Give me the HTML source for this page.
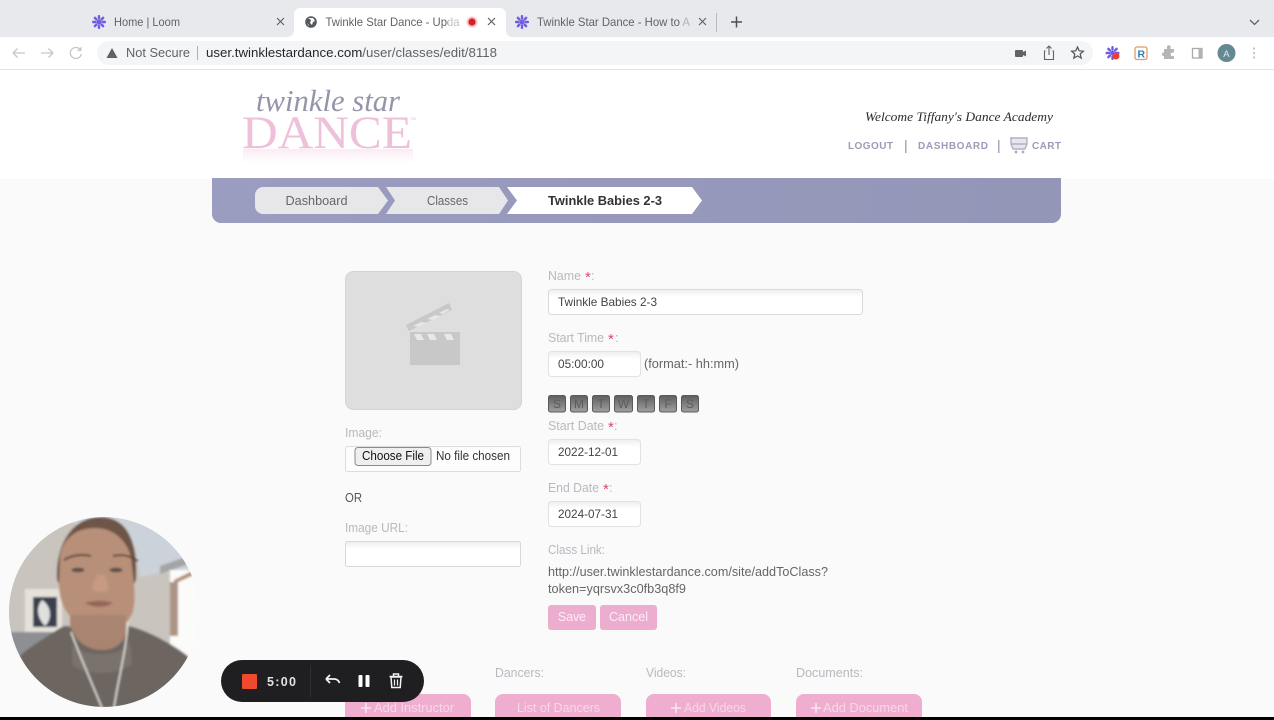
<!DOCTYPE html>
<html lang="en">
<head>
<meta charset="utf-8">
<title>Twinkle Star Dance</title>
<style>
html,body{margin:0;padding:0;width:1274px;height:720px;overflow:hidden;background:#fafafa}
svg{display:block;filter:blur(.35px)}
text{font-family:"Liberation Sans",sans-serif}
.lab{fill:#b8b8c0;font-size:13px}
.val{fill:#444;font-size:12px}
.star{fill:#dc4a6c;font-size:15px}
.tab{fill:#5f6368;font-size:12px}
</style>
</head>
<body>
<svg width="1274" height="720" viewBox="0 0 1274 720" xmlns="http://www.w3.org/2000/svg">
<defs>
<linearGradient id="fade" x1="0" y1="0" x2="0" y2="1"><stop offset="0" stop-color="#f0bcd8" stop-opacity=".3"/><stop offset="1" stop-color="#f0bcd8" stop-opacity="0"/></linearGradient>
<linearGradient id="day" x1="0" y1="0" x2="0" y2="1"><stop offset="0" stop-color="#5e5e5e"/><stop offset="1" stop-color="#a0a0a0"/></linearGradient>
<linearGradient id="inp" x1="0" y1="0" x2="0" y2="1"><stop offset="0" stop-color="#eeeeee"/><stop offset=".3" stop-color="#fff"/></linearGradient>
<linearGradient id="bar" x1="0" y1="0" x2="1" y2="0"><stop offset="0" stop-color="#9a9cc0"/><stop offset="1" stop-color="#9496b8"/></linearGradient>
<clipPath id="face"><circle cx="104" cy="612" r="95"/></clipPath>
<clipPath id="pageclip"><rect x="0" y="0" width="1274" height="717"/></clipPath>
<filter id="soft"><feGaussianBlur stdDeviation="1"/></filter>
<g id="loom"><g fill="#6f5ce0"><circle r="2.4"/><rect x="-1.2" y="-7" width="2.4" height="4.500" rx="1"/><rect x="-1.2" y="2.500" width="2.4" height="4.500" rx="1"/><rect x="-7" y="-1.2" width="4.500" height="2.4" rx="1"/><rect x="2.500" y="-1.2" width="4.500" height="2.4" rx="1"/><rect x="-1.2" y="-7" width="2.4" height="4.500" rx="1" transform="rotate(45)"/><rect x="-1.2" y="2.500" width="2.4" height="4.500" rx="1" transform="rotate(45)"/><rect x="-7" y="-1.2" width="4.500" height="2.4" rx="1" transform="rotate(45)"/><rect x="2.500" y="-1.2" width="4.500" height="2.4" rx="1" transform="rotate(45)"/></g></g>
</defs>

<!-- Page -->
<rect width="1274" height="720" fill="#fafafa"/>
<rect y="70" width="1274" height="109" fill="#fff"/>

<!-- Tab strip -->
<rect width="1274" height="37" fill="#e8e9ed"/>
<use href="#loom" x="99" y="22"/>
<text x="114" y="26" class="tab" textLength="66" lengthAdjust="spacingAndGlyphs">Home | Loom</text>
<path d="M277 18l7 7M284 18l-7 7" stroke="#5f6368" stroke-width="1.2" fill="none"/>
<path d="M286 37c5 0 8-2 8-7V14c0-3 3-6 6-6h200c3 0 6 3 6 6v16c0 5 3 7 7 7z" fill="#fff"/>
<circle cx="311" cy="22" r="5.8" fill="#55585d"/>
<path d="M308 18l3 2-1 3 2 2 1-3 2-1-2-3zM307 23l2 2v1z" fill="#fff"/>
<text x="325.500" y="26" class="tab" textLength="134" lengthAdjust="spacingAndGlyphs">Twinkle Star Dance - Upda</text>
<rect x="448" y="12" width="12" height="20" fill="#fff" opacity=".6"/>
<circle cx="472" cy="22" r="5.500" fill="#f4c4c4"/><circle cx="472" cy="22" r="3.600" fill="#d81f26"/>
<path d="M488 18l7 7M495 18l-7 7" stroke="#5f6368" stroke-width="1.2" fill="none"/>
<use href="#loom" x="522" y="22"/>
<text x="537" y="26" class="tab" textLength="153" lengthAdjust="spacingAndGlyphs">Twinkle Star Dance - How to A</text>
<rect x="680" y="12" width="11" height="20" fill="#e8e9ed" opacity=".6"/>
<path d="M699 18l7 7M706 18l-7 7" stroke="#5f6368" stroke-width="1.2" fill="none"/>
<rect x="716" y="13" width="1" height="19" fill="#b8babf"/>
<path d="M736.500 16.500v11M731 22h11" stroke="#4c4f54" stroke-width="1.5" fill="none"/>
<path d="M1250 20l4.500 4.500L1259 20" stroke="#5f6368" stroke-width="1.3" fill="none"/>

<!-- Toolbar -->
<rect y="37" width="1274" height="32" fill="#fff"/>
<rect y="69" width="1274" height="1" fill="#e3e4e7"/>
<path d="M13 53h12M13 53l4.500-4.500M13 53l4.500 4.500" stroke="#c4c6ca" stroke-width="1.3" fill="none"/>
<path d="M41 53h12M53 53l-4.500-4.500M53 53l-4.500 4.500" stroke="#c4c6ca" stroke-width="1.3" fill="none"/>
<path d="M80.500 50a5.500 5.500 0 1 0 .8 4" stroke="#c4c6ca" stroke-width="1.3" fill="none"/><path d="M81.500 46.500v4.500h-4.500z" fill="#c4c6ca"/>
<rect x="97" y="41" width="996" height="24" rx="12" fill="#f4f5f6"/>
<path d="M112 48l5.500 10h-11z" fill="#5f6368"/>
<text x="126" y="57" fill="#5f6368" font-size="12.500" textLength="64" lengthAdjust="spacingAndGlyphs">Not Secure</text>
<rect x="197" y="46" width="1" height="14" fill="#aeb0b4"/>
<text x="206" y="57" font-size="12.500" textLength="291" lengthAdjust="spacingAndGlyphs" fill="#5f6368"><tspan fill="#25272a">user.twinklestardance.com</tspan>/user/classes/edit/8118</text>
<rect x="1015" y="50" width="8" height="7" rx="1" fill="#5f6368"/><path d="M1023 52l3-1.500v6l-3-1.500z" fill="#5f6368"/>
<path d="M1045.500 51h-1v8.500h9V51h-1M1049 55V46.500M1046.500 48.500l2.500-2.500 2.500 2.500" stroke="#5f6368" stroke-width="1.100" fill="none"/>
<path d="M1077.500 47l1.700 3.800 4.200.4-3.200 2.800 1 4.100-3.700-2.200-3.700 2.200 1-4.100-3.200-2.800 4.200-.4z" stroke="#4f5256" stroke-width="1.200" fill="none"/>
<use href="#loom" x="1112.500" y="53"/><circle cx="1116" cy="56" r="3.500" fill="#ee3f30"/>
<rect x="1135" y="47" width="12" height="12.500" rx="2" fill="#fff" stroke="#e09a66" stroke-width="1.300"/>
<text x="1137.500" y="57.500" font-size="10.500" font-weight="bold" fill="#2d7fb8">R</text>
<path d="M1164 50h3v-2a1.800 1.800 0 0 1 3.600 0v2h3.400v3.500h-1.500a1.800 1.800 0 0 0 0 3.600h1.500v2.900h-10v-3h-1a2 2 0 0 1 0-3.500h1z" fill="#b4b6ba" transform="translate(0,-1)"/>
<rect x="1192.500" y="48.500" width="9.500" height="9.500" fill="#fff" stroke="#a8aaae" stroke-width="1.300"/><rect x="1198.500" y="48.500" width="3.500" height="9.500" fill="#b0b2b6"/>
<circle cx="1226.500" cy="53" r="9" fill="#668893"/>
<text x="1223.300" y="57" font-size="9.500" fill="#e8eef0">A</text>
<g fill="#c0c2c6"><circle cx="1254" cy="48.500" r="1.100"/><circle cx="1254" cy="53" r="1.100"/><circle cx="1254" cy="57.500" r="1.100"/></g>

<!-- Logo -->
<text x="256" y="111" font-style="italic" font-size="31" fill="#9494aa" textLength="144" lengthAdjust="spacingAndGlyphs" style="font-family:'Liberation Serif',serif">twinkle star</text>
<text x="242" y="148" font-size="47" fill="#efc0da" textLength="170" lengthAdjust="spacingAndGlyphs" style="font-family:'Liberation Serif',serif">DANCE</text>
<text x="410" y="120" font-size="4" fill="#ecb4d2">TM</text>
<rect x="243" y="149" width="170" height="14" fill="url(#fade)"/>

<!-- Header right -->
<text x="865" y="121" font-size="13" font-style="italic" fill="#2a2a2e" textLength="188" lengthAdjust="spacingAndGlyphs" style="font-family:'Liberation Serif',serif">Welcome Tiffany's Dance Academy</text>
<g font-size="10" font-weight="bold" fill="#9c9cb8">
<text x="848" y="149" textLength="45" lengthAdjust="spacing">LOGOUT</text>
<text x="904" y="150" font-size="14" font-weight="normal" fill="#8f8fae">|</text>
<text x="918" y="149" textLength="70" lengthAdjust="spacing">DASHBOARD</text>
<text x="997" y="150" font-size="14" font-weight="normal" fill="#8f8fae">|</text>
<text x="1032" y="149" textLength="29" lengthAdjust="spacing">CART</text>
</g>
<path d="M1010 138h17v6l-2 5h-12l-2-5v-6M1011 144h16" stroke="#b0b0c6" stroke-width="1.400" fill="#e6e6ee"/><circle cx="1016" cy="152" r="1.400" fill="#a8a8c0"/><circle cx="1023" cy="152" r="1.400" fill="#a8a8c0"/>

<!-- Breadcrumb -->
<path d="M212 178h849v36a9 9 0 0 1-9 9H221a9 9 0 0 1-9-9z" fill="url(#bar)"/>
<path d="M263 187h115l10 13.500-10 13.500H263a8 8 0 0 1-8-8v-11a8 8 0 0 1 8-8z" fill="#e7e7e9"/>
<path d="M386 187h113l9 13.500-9 13.500H386l9-13.500z" fill="#e7e7e9"/>
<path d="M507 187h185l10 13.500-10 13.500H507l10-13.500z" fill="#fff"/>
<text x="285.500" y="205" font-size="13" fill="#666" textLength="62" lengthAdjust="spacingAndGlyphs">Dashboard</text>
<text x="427" y="205" font-size="13" fill="#666" textLength="41" lengthAdjust="spacingAndGlyphs">Classes</text>
<text x="548" y="205" font-size="13" font-weight="bold" fill="#333" textLength="114" lengthAdjust="spacingAndGlyphs">Twinkle Babies 2-3</text>

<!-- Left column -->
<rect x="345.500" y="271.500" width="176" height="138" rx="8" fill="#dedede" stroke="#d4d4d4"/>
<rect x="410" y="332" width="50" height="33" fill="#c8c8c8"/>
<path d="M414 334h7l3 6h-7zM427 334h7l3 6h-7zM444 334h7l3 6h-7z" fill="#e8e8e8"/>
<path d="M406 325l43-22 3 7-43 21z" fill="#c8c8c8"/>
<path d="M413 326l8-4 6 1-8 4zM427 319l8-4 6 1-8 4zM439 313l8-4 3 1-7 4z" fill="#e6e6e6"/>
<text x="345" y="437" class="lab" textLength="37" lengthAdjust="spacingAndGlyphs">Image:</text>
<rect x="345.500" y="446.500" width="175" height="25" rx="2" fill="#fdfdfd" stroke="#dcdcdc"/>
<rect x="355" y="447.500" width="76" height="18" rx="3" fill="#efefef" stroke="#8a8a8a"/>
<text x="362" y="460" font-size="12.500" fill="#111" textLength="62" lengthAdjust="spacingAndGlyphs">Choose File</text>
<text x="436" y="460" font-size="12.500" fill="#333" textLength="74" lengthAdjust="spacingAndGlyphs">No file chosen</text>
<text x="345" y="502" font-size="12.500" fill="#555" textLength="17" lengthAdjust="spacingAndGlyphs">OR</text>
<text x="345" y="532" class="lab" textLength="63" lengthAdjust="spacingAndGlyphs">Image URL:</text>
<rect x="345.500" y="541.500" width="175" height="25" rx="2" fill="url(#inp)" stroke="#d8d8d8"/>

<!-- Right column -->
<text x="548" y="280" class="lab" textLength="33" lengthAdjust="spacingAndGlyphs">Name</text><text x="585" y="282" class="star">*</text><text x="591" y="280" class="lab">:</text>
<rect x="548.500" y="289.500" width="314" height="25" rx="3" fill="url(#inp)" stroke="#dadada"/>
<text x="558" y="306" class="val" textLength="99" lengthAdjust="spacingAndGlyphs">Twinkle Babies 2-3</text>
<text x="548" y="342" class="lab" textLength="56" lengthAdjust="spacingAndGlyphs">Start Time</text><text x="608" y="344" class="star">*</text><text x="615" y="342" class="lab">:</text>
<rect x="548.500" y="351.500" width="92" height="25" rx="3" fill="url(#inp)" stroke="#e2e2e2"/>
<text x="558" y="368" class="val" textLength="46" lengthAdjust="spacingAndGlyphs">05:00:00</text>
<text x="644" y="368" font-size="12.500" fill="#666" textLength="95" lengthAdjust="spacingAndGlyphs">(format:- hh:mm)</text>

<g stroke="#5a5a5a" stroke-width="1">
<rect x="548.500" y="395.500" width="17" height="16.500" rx="2" fill="url(#day)"/>
<rect x="570.500" y="395.500" width="17" height="16.500" rx="2" fill="url(#day)"/>
<rect x="592.500" y="395.500" width="17" height="16.500" rx="2" fill="url(#day)"/>
<rect x="614.500" y="395.500" width="18" height="16.500" rx="2" fill="url(#day)"/>
<rect x="637.500" y="395.500" width="17" height="16.500" rx="2" fill="url(#day)"/>
<rect x="659.500" y="395.500" width="17" height="16.500" rx="2" fill="url(#day)"/>
<rect x="681.500" y="395.500" width="17" height="16.500" rx="2" fill="url(#day)"/>
</g>
<g font-size="12" fill="#5c5c5c" text-anchor="middle">
<text x="557" y="408">S</text><text x="579" y="408">M</text><text x="601" y="408">T</text><text x="623.500" y="408">W</text><text x="646" y="408">T</text><text x="668" y="408">F</text><text x="690" y="408">S</text>
</g>

<text x="548" y="430" class="lab" textLength="56" lengthAdjust="spacingAndGlyphs">Start Date</text><text x="608" y="432" class="star">*</text><text x="614" y="430" class="lab">:</text>
<rect x="548.500" y="439.500" width="92" height="25" rx="3" fill="url(#inp)" stroke="#e2e2e2"/>
<text x="558" y="456" class="val" textLength="60" lengthAdjust="spacingAndGlyphs">2022-12-01</text>
<text x="548" y="492" class="lab" textLength="51" lengthAdjust="spacingAndGlyphs">End Date</text><text x="603" y="494" class="star">*</text><text x="609" y="492" class="lab">:</text>
<rect x="548.500" y="501.500" width="92" height="25" rx="3" fill="url(#inp)" stroke="#e2e2e2"/>
<text x="558" y="518" class="val" textLength="60" lengthAdjust="spacingAndGlyphs">2024-07-31</text>
<text x="548" y="554" class="lab" textLength="57" lengthAdjust="spacingAndGlyphs">Class Link:</text>
<text x="548" y="576" font-size="12.500" fill="#666" textLength="280" lengthAdjust="spacingAndGlyphs">http://user.twinklestardance.com/site/addToClass?</text>
<text x="548" y="593" font-size="12.500" fill="#666" textLength="138" lengthAdjust="spacingAndGlyphs">token=yqrsvx3c0fb3q8f9</text>
<rect x="548" y="605" width="48" height="25" rx="3" fill="#edadcf"/>
<rect x="600" y="605" width="57" height="25" rx="3" fill="#edadcf"/>
<text x="558" y="621" font-size="12.500" fill="#fbeef5" textLength="28" lengthAdjust="spacingAndGlyphs">Save</text>
<text x="609" y="621" font-size="12.500" fill="#fbeef5" textLength="39" lengthAdjust="spacingAndGlyphs">Cancel</text>

<!-- Lower section -->
<text x="495" y="677" class="lab" textLength="49" lengthAdjust="spacingAndGlyphs">Dancers:</text>
<text x="646" y="677" class="lab" textLength="40" lengthAdjust="spacingAndGlyphs">Videos:</text>
<text x="796" y="677" class="lab" textLength="67" lengthAdjust="spacingAndGlyphs">Documents:</text>
<g clip-path="url(#pageclip)">
<rect x="345" y="694" width="126" height="40" rx="8" fill="#efadcf"/>
<rect x="495" y="694" width="126" height="40" rx="8" fill="#efadcf"/>
<rect x="646" y="694" width="125" height="40" rx="8" fill="#efadcf"/>
<rect x="796" y="694" width="126" height="40" rx="8" fill="#efadcf"/>
<g font-size="13" fill="#f8d8e8">
<text x="374" y="712" textLength="80" lengthAdjust="spacingAndGlyphs">Add Instructor</text>
<text x="517" y="712" textLength="83" lengthAdjust="spacingAndGlyphs">List of Dancers</text>
<text x="684" y="712" textLength="62" lengthAdjust="spacingAndGlyphs">Add Videos</text>
<text x="823" y="712" textLength="85" lengthAdjust="spacingAndGlyphs">Add Document</text>
</g>
<path d="M366 703v10M361 708h10M676 703v10M671 708h10M816 703v10M811 708h10" stroke="#f8e8f0" stroke-width="1.500"/>
</g>
<rect y="717" width="1274" height="3" fill="#000"/>

<!-- Webcam bubble -->
<g clip-path="url(#face)"><g filter="url(#soft)">
<rect x="5" y="515" width="200" height="200" fill="#c9c4bd"/>
<path d="M50 515h155v55l-40 2-25 5-5-30-20-10z" fill="#ccd2d9"/>
<path d="M160 566l40-14v8l-40 14z" fill="#a3a4a6"/>
<rect x="170" y="570" width="35" height="90" fill="#fbfbfa"/>
<rect x="170" y="582" width="8" height="54" fill="#ad9484"/>
<path d="M174 580l24-12v5l-24 11z" fill="#b58f7c"/>
<rect x="25" y="589" width="37" height="45" fill="#e6e1da"/>
<rect x="33" y="597" width="24" height="30" fill="#3a4050"/>
<path d="M42 600c10 6 10 20 3 26-7-7-10-18-3-26z" fill="#e0e0e0"/>
<rect x="5" y="632" width="52" height="30" fill="#8d8f95"/>
<path d="M57 580c-2-36 16-63 43-63s38 24 36 63l-3 6H60z" fill="#6e5546"/>
<path d="M59 584c0 12 3 24 12 33 8 10 16 17 30 17s25-8 31-20c3-8 3-20 2-30l-3-27c-4-15-16-29-36-29-22 0-33 14-35 28z" fill="#b89079"/>
<rect x="70" y="615" width="56" height="40" fill="#a98470"/>
<path d="M64 560c8-5 18-6 27-4M113 556c9-2 18 0 25 5" stroke="#5c4538" stroke-width="2" fill="none"/>
<ellipse cx="78" cy="570" rx="6.500" ry="2.300" fill="#5c5048"/>
<ellipse cx="116" cy="570" rx="6.500" ry="2.300" fill="#5c5048"/>
<path d="M97 575c-3 9-7 13-3 15 4 3 11 3 14 0 2-3-2-9-3-15z" fill="#c89a84"/>
<path d="M85 603c8-3 20-3 28 0-8 5-20 5-28 0z" fill="#96655a"/>
<path d="M20 656c10-10 28-20 40-28 6-4 11-2 12 2 4 10 14 20 30 20s24-10 26-24c14 2 46 18 62 32l-10 50H40z" fill="#6d6661"/>
<path d="M72 645c8 7 16 9 30 9s22-4 28-12l2 22c-14 12-48 12-60 0z" fill="#7a736c"/>
<path d="M71 632c8 22 18 44 31 76M128 622c-2 30-10 58-14 86" stroke="#e7e3de" stroke-width="1.500" fill="none"/>
</g></g>

<!-- Loom bar -->
<rect x="221" y="660" width="203" height="42" rx="21" fill="#1f1f21"/>
<rect x="242" y="674" width="15" height="15" rx="1" fill="#f0492e"/>
<text x="267" y="686" font-size="12.500" font-weight="bold" fill="#e4e4e4" textLength="29" lengthAdjust="spacing">5:00</text>
<rect x="310" y="665" width="1" height="32" fill="#303032"/>
<path d="M326 680h9a6 6 0 0 1 4.500 4M326 680l4-4M326 680l4 4" transform="translate(0,-1)" stroke="#f2f2f2" stroke-width="1.800" fill="none"/>
<rect x="358.500" y="675" width="4" height="12" rx="1" fill="#fff"/><rect x="365.500" y="675" width="4" height="12" rx="1" fill="#fff"/>
<path d="M391 677h10l-.8 10.500h-8.400zM389.500 676.500h13M393.500 676v-2h5v2" stroke="#f2f2f2" stroke-width="1.500" fill="none"/>
<path d="M394.500 679.500v6M397.500 679.500v6" stroke="#f2f2f2" stroke-width="1.200"/>
</svg>
</body>
</html>
